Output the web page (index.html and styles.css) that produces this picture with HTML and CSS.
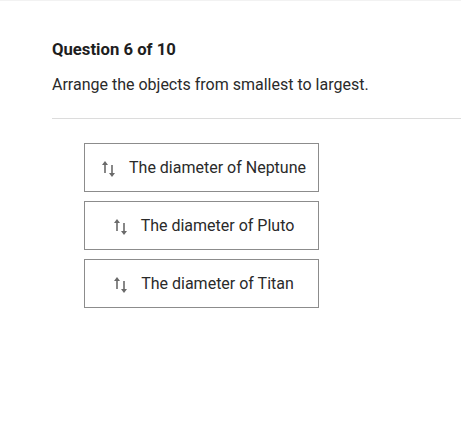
FILE: index.html
```html
<!DOCTYPE html>
<html>
<head>
<meta charset="utf-8">
<link rel="stylesheet" href="styles.css">
</head>
<body>
<div class="topline"></div>
<main class="quiz">
  <h1 class="title">Question 6 of 10</h1>
  <p class="prompt">Arrange the objects from smallest to largest.</p>
  <hr class="sep">
  <ul class="items">
    <li class="item"><svg class="icon" viewBox="0 0 13 18" width="13" height="18"><path d="M3 4v9" /><path class="head" d="M0 5L3 1L6 5Z"/><path d="M10 5v9"/><path class="head" d="M7 13L10 17L13 13Z"/></svg><span>The diameter of Neptune</span></li>
    <li class="item"><svg class="icon" viewBox="0 0 13 18" width="13" height="18"><path d="M3 4v9" /><path class="head" d="M0 5L3 1L6 5Z"/><path d="M10 5v9"/><path class="head" d="M7 13L10 17L13 13Z"/></svg><span>The diameter of Pluto</span></li>
    <li class="item"><svg class="icon" viewBox="0 0 13 18" width="13" height="18"><path d="M3 4v9" /><path class="head" d="M0 5L3 1L6 5Z"/><path d="M10 5v9"/><path class="head" d="M7 13L10 17L13 13Z"/></svg><span>The diameter of Titan</span></li>
  </ul>
</main>
</body>
</html>
```
FILE: styles.css
```css
html, body {
  margin: 0;
  padding: 0;
  background: #fff;
}
body {
  font-family: Roboto, "Liberation Sans", sans-serif;
  color: #222;
}
.topline {
  height: 1px;
  background: #f2f2f2;
}
.quiz {
  padding-left: 52px;
}
.title {
  margin: 39px 0 0;
  font-size: 16.7px;
  line-height: 20px;
  font-weight: 700;
  color: #1e1e1e;
}
.prompt {
  margin: 15px 0 0;
  font-size: 16px;
  line-height: 20px;
  color: #2a2a2a;
}
.sep {
  margin: 23px 0 0;
  border: 0;
  height: 1px;
  background: #dcdcdc;
}
.items {
  list-style: none;
  margin: 24px 0 0 32px;
  padding: 0;
  display: flex;
  flex-direction: column;
  gap: 9px;
  width: 235px;
}
.item {
  box-sizing: border-box;
  height: 49px;
  border: 1px solid #8c8c8c;
  display: flex;
  align-items: center;
  justify-content: center;
  padding-left: 5px;
  gap: 14px;
  font-size: 16px;
  color: #2a2a2a;
}
.icon {
  flex: none;
  margin-top: 2px;
}
.icon path {
  stroke: #6a6a6a;
  stroke-width: 1.6;
  fill: none;
}
.icon path.head {
  fill: #6a6a6a;
  stroke: none;
}
```
